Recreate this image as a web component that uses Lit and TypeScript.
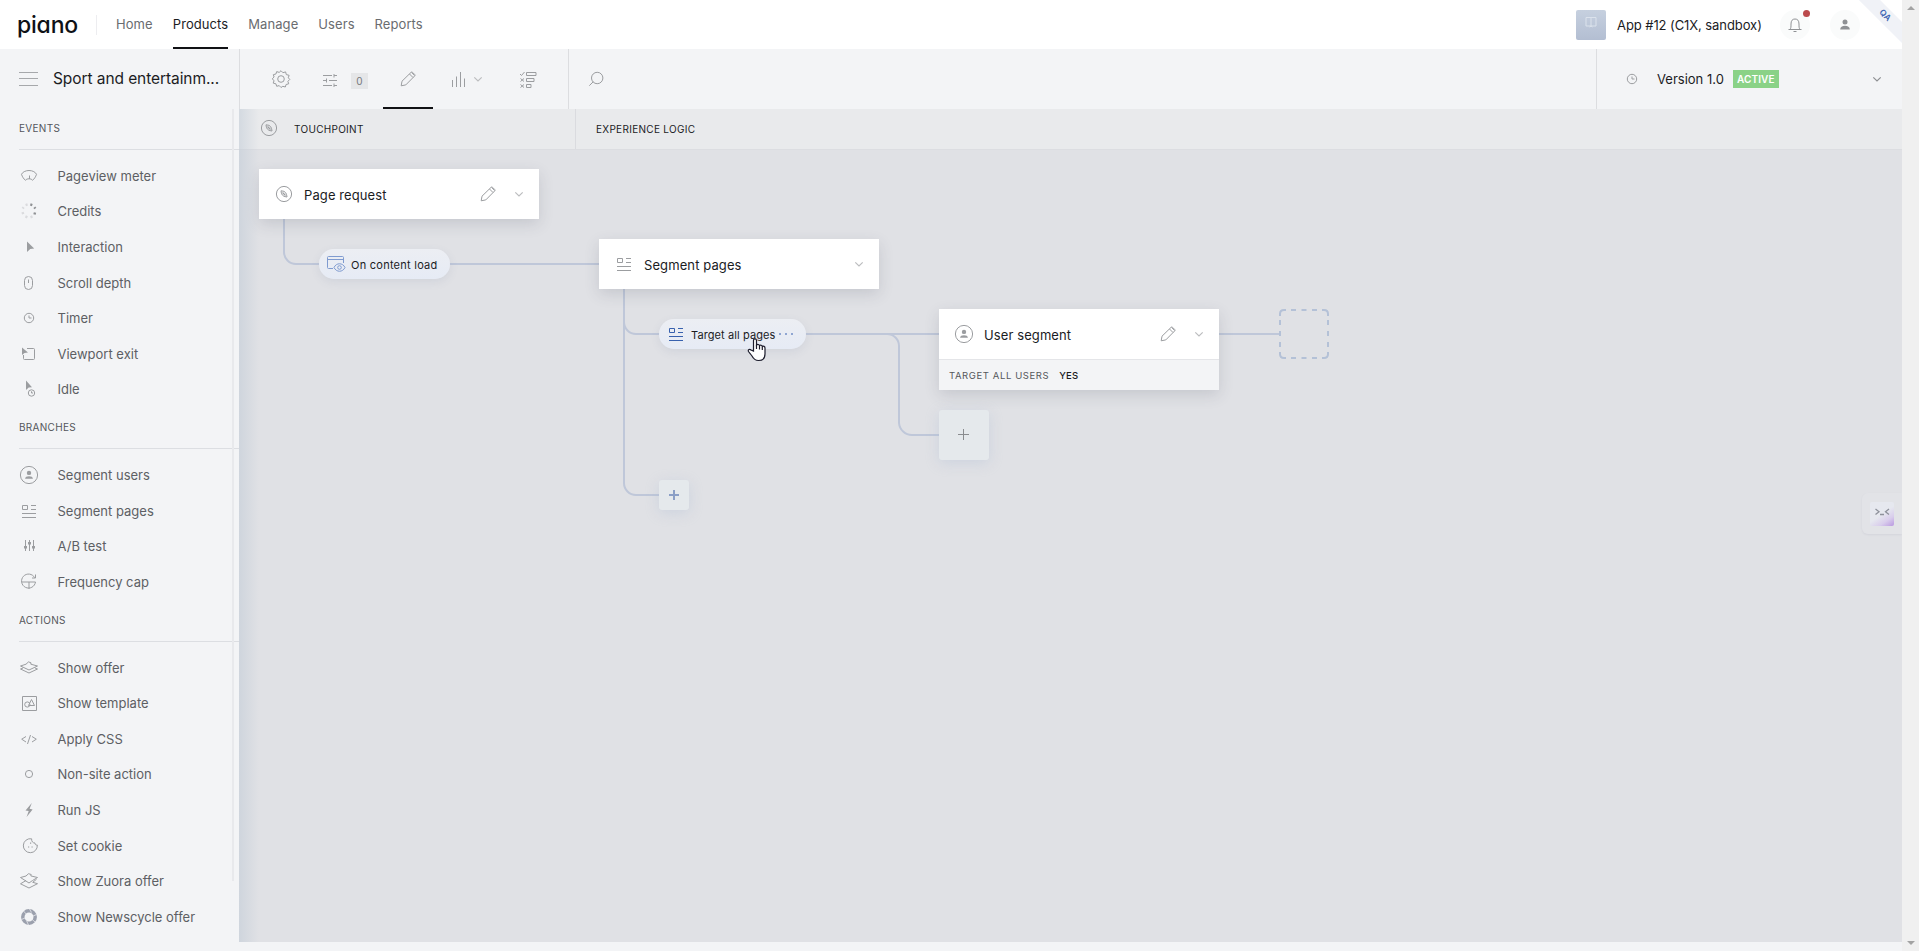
import { LitElement, html, css, svg, nothing } from 'lit';
import { customElement, property } from 'lit/decorators.js';

const icons: Record<string, unknown> = {
  meter: svg`<path d="M2.500 8.300C3.500 6.200 6.300 4.500 10 4.500s6.500 1.700 7.500 3.800c-.8 2.700-2.300 4.500-3.900 6-.8-1-2-1.500-3.600-1.500s-2.800.5-3.600 1.500C4.800 12.800 3.300 11 2.500 8.300z"/><path d="M10.500 13V9.500"/>`,
  credits: svg`<g stroke-width="2.400"><path d="M11.300 3.400l2 .7M15.300 6.200l1.100 1.400M16 11.400l-.5 2.200" stroke="#8f9194"/><path d="M8.600 3.400l-2 .7M4.700 6.200L3.600 7.600M3.500 11.200l.7 1.900M6.400 15.400l2 .9M11.500 16.300l2-.9" stroke="#dadbde"/></g>`,
  pointer: svg`<path class="fill" d="M8 4.500l7.200 7-4 .4L8 15z"/>`,
  mouse: svg`<rect x="5.500" y="3.500" width="8" height="13" rx="4"/><path d="M9.500 6.500v3.500"/>`,
  clock: svg`<circle cx="10" cy="10" r="4.700"/><path d="M10 7.500V10h2.500"/>`,
  viewport: svg`<path d="M8 4.500h6.500q1 0 1 1v9q0 1-1 1h-9q-1 0-1-1V11"/><path class="fill" d="M3 3.500l6 5-3.500.4L3 11z"/>`,
  idle: svg`<path class="fill" d="M7 1.500l6 6.800-3.300.3L7 11z"/><circle cx="12.500" cy="14" r="3.200"/><path d="M12.500 12.300V14h1.500"/>`,
  user: svg`<circle cx="10" cy="10" r="8.600"/><circle class="fill" cx="10" cy="7.900" r="2.200"/><path class="fill" d="M6.100 13.800c0-1.700 1.700-2.500 3.900-2.500s3.900.8 3.900 2.500z"/>`,
  pages: svg`<path d="M3.500 4.500h5v4h-5zM12 4.500h5M12 8.500h5M3 12.500h14M3 16.500h14"/>`,
  ab: svg`<path d="M6.500 4v11M10.500 4v11M14.500 4v11"/><path class="fill" d="M5 10h3v2.500H5zM9 6h3v2.500H9zM13 10h3v2.500h-3z"/>`,
  cap: svg`<path d="M15.700 5.700A7 7 0 1 0 16.500 10H2.500M10 10v7M16.500 2.500V6h-3.500"/>`,
  offer: svg`<path d="M1.500 8l5.500-1.800 2.500-2.300L12 4.800l-.2 1.400L18.500 8 10 12z"/><path d="M4 10l-2.500 1L10 15l8.500-4-2.500-1"/>`,
  template: svg`<path d="M3.500 3.500h14v14h-14z"/><circle cx="8.300" cy="11.500" r="2.600"/><path d="M9.500 12.500l3-6 3 6z"/>`,
  css: svg`<path d="M7 7.500l-4.300 2.700L7 13M13 7.500l4.300 2.700L13 13M11.500 6l-3 9"/>`,
  ring: svg`<circle cx="10" cy="10" r="3.600"/>`,
  bolt: svg`<path class="fill" d="M12.800 3L6.500 10.500l3.200.6L7.600 17l6-7.500-3-.7z"/>`,
  cookie: svg`<path d="M12.600 2.800A7 7 0 1 0 18.300 9c-1.600.2-2.400-.6-2.300-2-1.900.2-3.600-1.400-3.400-4.200z"/><path class="fill" d="M11 6.600h1.200v1.200H11zM9 10.400h1.200v1.200H9zM12.500 10.400h1.200v1.200h-1.200z"/>`,
  zuora: svg`<path d="M1.500 6.500L7 5l2.500-2.300 2.700.8-.4 1.400 6.700 1.600-5 3L10 12z"/><path d="M7 9.500l-5.500 3.300L10 17l8.500-4.300-4.800-1.400 3.800-3"/>`,
  newscycle: svg`<circle cx="10" cy="10" r="6.200" stroke-width="3.500" stroke="#9ba0ad"/><path stroke="#f3f4f6" stroke-width=".7" d="M10.500 2l2 3.500M17.500 7.500l-3.700 1.700M16 15l-3-2.700M9.500 18l-1.800-4M2.500 12.500l3.600-1.600M4.500 4l2.700 3"/>`,
  compass: svg`<circle cx="10" cy="10" r="7.600"/><path d="M7 6.800q3.600 0 4.800 2.100 1 1.500 1.200 4.100-3.500-.2-4.700-2-1.200-1.500-1.300-4.200z"/><path d="M8.500 8.500l3 3" stroke-width="1.300"/>`,
  gear: svg`<circle cx="10" cy="10" r="3.300"/><path d="M10 1.700l1.900 2 2.700-.8.700 2.700 2.800.7-.8 2.500 1.500 1.600-1.900 1.900.8 2.500-2.600.7-.8 2.500-2.500-.7L10 18.500l-1.800-1.900-2.500.7-.8-2.500-2.700-.7.900-2.500-1.900-1.700 1.900-1.900-.8-2.300 2.600-.7.800-2.400 2.500.8z" stroke-linejoin="round"/>`,
  sliders: svg`<path d="M3 5.500h9M14 5.500h3M14 4v3.500M3 10.500h3.500M9 10.500h8M6.500 8.500v4M3 15.500h9M14 15.500h3M14 13.500V17"/>`,
  pencil: svg`<path d="M3.200 16.800l.8-4.600L13 3.400c.5-.5 1.100-.5 1.600 0l2 2c.5.500.5 1.100 0 1.600l-8.800 8.900zM11.500 5l3.500 3.500M13.500 3.400l3.100 3.100"/>`,
  bars: svg`<path d="M3.500 11v7M7.500 7.500V18M11.500 3v15M15.500 9.500V18"/>`,
  chevron: svg`<path d="M6.300 8.300L10 12l3.700-3.700" stroke-width="1.200"/>`,
  checklist: svg`<path d="M2 5l1.500 1.500L6.500 3M8.500 3.500H18v3H8.500zM8.500 9.500H16v3H8.500zM8.500 15.500H13v3H8.500zM2.500 9.500l3.500 3M6 9.500l-3.500 3M2.500 15.500l3.500 3M6 15.500l-3.500 3"/>`,
  search: svg`<circle cx="11.200" cy="9" r="5.700"/><path d="M7.200 12.800L3.300 16.700"/>`,
  bell: svg`<path d="M3.500 14.500h13M5 14.500c1-1.500 1-2.500 1-5.500C6 5.500 7.500 4 10 4s4 1.500 4 5c0 3 0 4 1 5.500M8.500 16.500h3"/>`,
  person: svg`<circle class="fill" cx="10" cy="6.900" r="2.500"/><path class="fill" d="M5.200 14.500c0-2.500 2-3.700 4.800-3.700s4.800 1.200 4.800 3.700z"/>`,
  plus: svg`<path d="M10.500 5v11M5 10.500h11"/>`,
  boldplus: svg`<path stroke-width="2" d="M10 5v10M5 10h10"/>`,
  browser: svg`<path d="M7 14.500H2.500q-1 0-1-1v-10q0-1 1-1h14q1 0 1 1V9M1.500 5.500h16"/><path d="M8 13.500c2.300-5 8.700-5 11 0-2.300 5-8.700 5-11 0z"/><circle cx="13.500" cy="13.500" r="1.800"/>`,
  book: svg`<path d="M10 5.500v9M5 5.500h10v8.500H5zM8.500 15l1.500-1 1.500 1"/>`,
};

const menu = [
  {
    title: 'EVENTS',
    items: [
      ['meter', 'Pageview meter'],
      ['credits', 'Credits'],
      ['pointer', 'Interaction'],
      ['mouse', 'Scroll depth'],
      ['clock', 'Timer'],
      ['viewport', 'Viewport exit'],
      ['idle', 'Idle'],
    ],
  },
  {
    title: 'BRANCHES',
    items: [
      ['user', 'Segment users'],
      ['pages', 'Segment pages'],
      ['ab', 'A/B test'],
      ['cap', 'Frequency cap'],
    ],
  },
  {
    title: 'ACTIONS',
    items: [
      ['offer', 'Show offer'],
      ['template', 'Show template'],
      ['css', 'Apply CSS'],
      ['ring', 'Non-site action'],
      ['bolt', 'Run JS'],
      ['cookie', 'Set cookie'],
      ['zuora', 'Show Zuora offer'],
      ['newscycle', 'Show Newscycle offer'],
    ],
  },
];

@customElement('ui-icon')
export class UiIcon extends LitElement {
  @property() name = '';

  static styles = css`
    :host {
      display: block;
      width: 20px;
      height: 20px;
      flex: none;
      color: #9b9da0;
    }

    svg {
      display: block;
      fill: none;
      stroke: currentColor;
      stroke-width: 1;
    }

    .fill {
      fill: currentColor;
      stroke: none;
    }
  `;

  render() {
    return html`<svg width="20" height="20" viewBox="0 0 20 20">${icons[this.name]}</svg>`;
  }
}

@customElement('top-header')
export class TopHeader extends LitElement {
  static styles = css`
    :host {
      display: flex;
      height: 49px;
      flex: none;
      align-items: center;
      background: #fff;
      position: relative;
      overflow: hidden;
    }

    .logo {
      width: 77px;
      padding-left: 17px;
      box-sizing: border-box;
      font: 500 23px/48px Inter, sans-serif;
      font-feature-settings: 'cv11';
      letter-spacing: -0.2px;
      color: #0e1116;
    }

    .separator {
      width: 1px;
      height: 20px;
      margin-left: 19px;
      background: #ededf0;
    }

    nav {
      display: flex;
      gap: 20px;
      margin-left: 19px;
      flex: 1;
    }

    .link {
      font-size: 13px;
      line-height: 49px;
      height: 49px;
      box-sizing: border-box;
      letter-spacing: 0.080px;
      color: #6a6c70;
    }

    .active {
      color: #1b1c1f;
      box-shadow: inset 0 -2px #101114;
    }

    .app-logo {
      width: 30px;
      height: 30px;
      border-radius: 2px;
      background: linear-gradient(#c6d0df, #b3bed2);
      display: flex;
      justify-content: center;
      padding-top: 2px;
      box-sizing: border-box;
    }

    .app-logo ui-icon {
      color: #dbe2ec;
    }

    .app-name {
      margin-left: 11px;
      width: 145px;
      white-space: nowrap;
      font-size: 13px;
      letter-spacing: -0.080px;
    }

    .round {
      width: 30px;
      height: 30px;
      margin-left: 18px;
      border-radius: 50%;
      background: #fafbfb;
      display: flex;
      align-items: center;
      justify-content: center;
      position: relative;
    }

    .round ui-icon {
      color: #8f9194;
    }

    .user {
      margin: 0 42px 0 20px;
    }

    .dot {
      position: absolute;
      right: 0;
      top: 0;
      width: 7px;
      height: 7px;
      border-radius: 50%;
      background: #bb4a4c;
    }

    .ribbon {
      position: absolute;
      width: 80px;
      height: 15px;
      right: -23px;
      top: 8px;
      transform: rotate(45deg);
      background: #f0f2f7;
      color: #3f66b3;
      font: 600 8.500px/15px Inter, sans-serif;
      text-align: center;
    }
  `;

  render() {
    return html`
      <div class="logo">piano</div>
      <div class="separator"></div>
      <nav>
        ${['Home', 'Products', 'Manage', 'Users', 'Reports'].map(
          (label) => html`<div class="link ${label === 'Products' ? 'active' : ''}">${label}</div>`
        )}
      </nav>
      <div class="app-logo"><ui-icon name="book"></ui-icon></div>
      <div class="app-name">App #12 (C1X, sandbox)</div>
      <div class="round"><ui-icon name="bell"></ui-icon><div class="dot"></div></div>
      <div class="round user"><ui-icon name="person"></ui-icon></div>
      <div class="ribbon">QA</div>
    `;
  }
}

@customElement('side-menu')
export class SideMenu extends LitElement {
  static styles = css`
    :host {
      display: block;
      width: 239px;
      flex: none;
      position: relative;
      background: #f3f4f6;
    }

    .head {
      height: 60px;
      display: flex;
      align-items: center;
      padding-left: 19px;
      box-sizing: border-box;
    }

    .burger {
      width: 19px;
      height: 14px;
      box-sizing: border-box;
      border-top: 1px solid #a6a8ab;
      border-bottom: 1px solid #a6a8ab;
      display: flex;
      align-items: center;
      margin-bottom: 1px;
    }

    .burger::before {
      content: '';
      width: 100%;
      height: 1px;
      background: #a6a8ab;
    }

    .title {
      margin: 0 0 1px 15px;
      font-size: 15.500px;
      letter-spacing: -0.080px;
      white-space: nowrap;
    }

    .section {
      height: 40px;
      margin-left: 19px;
      border-bottom: 1px solid #dcdee2;
      font-size: 10px;
      line-height: 39px;
      letter-spacing: 0.300px;
      color: #54565b;
    }

    .list {
      padding: 8px 0 1.200px;
    }

    .item {
      height: 35.600px;
      display: flex;
      align-items: center;
      padding-left: 19px;
      font-size: 13px;
      color: #5d5f64;
    }

    .item span {
      margin-left: 18.500px;
    }

    .track {
      position: absolute;
      left: 232px;
      top: 60px;
      width: 2px;
      height: 772px;
      background: #e8e9ec;
    }
  `;

  render() {
    return html`
      <div class="head">
        <div class="burger"></div>
        <div class="title">Sport and entertainm...</div>
      </div>
      ${menu.map(
        (group) => html`
          <div class="section">${group.title}</div>
          <div class="list">
            ${group.items.map(
              ([icon, label]) => html`
                <div class="item"><ui-icon name=${icon}></ui-icon><span>${label}</span></div>
              `
            )}
          </div>
        `
      )}
      <div class="track"></div>
    `;
  }
}

@customElement('tool-bar')
export class ToolBar extends LitElement {
  static styles = css`
    :host {
      display: flex;
      height: 60px;
      flex: none;
      background: #f3f4f6;
      border-left: 1px solid #dcdde0;
    }

    .tools {
      width: 328px;
      border-right: 1px solid #dcdde0;
      display: flex;
    }

    .tool {
      display: flex;
      align-items: center;
    }

    .tool > ui-icon {
      margin-bottom: 1px;
    }

    .gear {
      padding-left: 30.500px;
      width: 49.500px;
    }

    .filters {
      width: 63px;
    }

    .badge {
      width: 17px;
      height: 16px;
      margin: 4px 0 0 11px;
      background: #e5e6e8;
      color: #77797d;
      font-size: 10px;
      line-height: 17px;
      text-align: center;
    }

    .filters ui-icon {
      margin-top: 2px;
    }

    .edit {
      width: 50px;
      justify-content: center;
      box-shadow: inset 0 -2px #101114;
    }

    .stats {
      padding-left: 16px;
      width: 69px;
    }

    .stats ui-icon + ui-icon {
      margin-left: -1px;
      color: #bcbdbf;
    }

    .search {
      flex: 1;
      padding-left: 17px;
    }

    .version {
      width: 305px;
      border-left: 1px solid #dcdde0;
    }

    .version span {
      margin: 0 9px 0 15px;
      font-size: 13px;
    }

    .version ui-icon:first-child {
      margin-left: 25px;
    }

    .tag {
      height: 18px;
      width: 46px;
      text-align: center;
      background: #8ad287;
      color: #fff;
      font-size: 10px;
      font-weight: 600;
      line-height: 19px;
      letter-spacing: 0.100px;
    }

    .open {
      margin-left: auto;
      margin-right: 15px;
      color: #8d8f92;
    }
  `;

  render() {
    return html`
      <div class="tools">
        <div class="tool gear"><ui-icon name="gear"></ui-icon></div>
        <div class="tool filters">
          <ui-icon name="sliders"></ui-icon>
          <div class="badge">0</div>
        </div>
        <div class="tool edit"><ui-icon name="pencil"></ui-icon></div>
        <div class="tool stats">
          <ui-icon name="bars"></ui-icon>
          <ui-icon name="chevron"></ui-icon>
        </div>
        <div class="tool"><ui-icon name="checklist"></ui-icon></div>
      </div>
      <div class="tool search"><ui-icon name="search"></ui-icon></div>
      <div class="tool version">
        <ui-icon name="clock"></ui-icon>
        <span>Version 1.0</span>
        <div class="tag">ACTIVE</div>
        <ui-icon class="open" name="chevron"></ui-icon>
      </div>
    `;
  }
}

@customElement('flow-card')
export class FlowCard extends LitElement {
  @property() icon = '';
  @property() label = '';
  @property({ type: Boolean }) editable = false;

  static styles = css`
    :host {
      display: block;
      width: 280px;
      background: #fff;
      box-shadow: 0 5px 14px rgba(60, 70, 90, 0.16);
    }

    .row {
      height: 50px;
      display: flex;
      align-items: center;
      padding: 0 10px 0 15px;
    }

    .label {
      flex: 1;
      margin: 1px 0 0 10px;
      font-size: 13px;
      letter-spacing: 0.100px;
    }

    .pencil {
      margin-right: 11px;
    }

    .chevron {
      color: #bcbdbf;
    }
  `;

  render() {
    return html`
      <div class="row">
        <ui-icon name=${this.icon}></ui-icon>
        <div class="label">${this.label}</div>
        ${this.editable ? html`<ui-icon class="pencil" name="pencil"></ui-icon>` : nothing}
        <ui-icon class="chevron" name="chevron"></ui-icon>
      </div>
      <slot></slot>
    `;
  }
}

@customElement('flow-canvas')
export class FlowCanvas extends LitElement {
  static styles = css`
    :host {
      display: flex;
      flex-direction: column;
      height: 833px;
      position: relative;
      background: #e0e1e5;
      overflow: hidden;
    }

    .columns {
      height: 40px;
      flex: none;
      display: flex;
      background: #e9eaec;
      box-shadow: 0 1px #dcdde1;
      font-size: 10px;
      line-height: 40px;
      letter-spacing: 0.300px;
    }

    .touchpoint {
      width: 337px;
      box-sizing: border-box;
      display: flex;
      align-items: center;
      padding-left: 20px;
      border-right: 1px solid #dadbdf;
    }

    .touchpoint ui-icon {
      margin: 0 15px 2px 0;
    }

    .logic {
      padding-left: 20px;
    }

    .shade {
      position: absolute;
      inset: 0 auto 0 0;
      width: 20px;
      background: linear-gradient(90deg, rgba(190, 201, 213, 0.500), rgba(190, 201, 213, 0));
    }

    .board {
      flex: 1;
      position: relative;
    }

    .lines {
      position: absolute;
      left: 0;
      top: 0;
      fill: none;
      stroke: #bfc7d9;
      stroke-width: 2;
    }

    .node {
      position: absolute;
    }

    .request { left: 20px; top: 20px; }
    .segment { left: 360px; top: 90px; }
    .users { left: 700px; top: 160px; }

    .pill {
      height: 30px;
      box-sizing: border-box;
      border-radius: 15px;
      background: linear-gradient(#eceef3, #e6ebf5);
      box-shadow: 0 3px 10px rgba(80, 100, 140, 0.100);
      display: flex;
      align-items: center;
      padding-left: 7px;
      font-size: 11px;
      letter-spacing: 0.100px;
      white-space: nowrap;
    }

    .pill span { margin: 1px 0 0 5px; }
    .load { left: 80px; top: 100px; width: 131px; letter-spacing: 0.250px; }
    .load ui-icon { color: #7f9bd0; margin-left: 0; }
    .target { left: 420px; top: 170px; width: 147px; }
    .target ui-icon { color: #3861ae; }

    .dots {
      display: flex;
      gap: 4px;
      margin-left: 4px;
    }

    .dots i {
      width: 2px;
      height: 2px;
      background: #8fa6d2;
    }

    .footer {
      height: 30px;
      border-top: 1px solid #e4e5e8;
      background: #f3f4f6;
      display: flex;
      gap: 10px;
      padding-left: 10px;
      font-size: 9.500px;
      line-height: 32px;
      letter-spacing: 0.600px;
      color: #55575b;
    }

    .footer b {
      font-weight: 500;
      letter-spacing: 0.200px;
      color: #1b1c1f;
    }

    .add {
      display: flex;
      align-items: center;
      justify-content: center;
      border-radius: 3px;
      background: #e5e9ec;
      box-shadow: 0 3px 14px rgba(160, 180, 210, 0.300);
    }

    .small { left: 420px; top: 331px; width: 30px; height: 30px; }
    .small ui-icon { color: #8b9fc6; }
    .large { left: 700px; top: 261px; width: 50px; height: 50px; }
    .large ui-icon { color: #8a8c8f; margin: 0 2px 2px 0; }

    .cursor {
      position: absolute;
      left: 508px;
      top: 188px;
    }

    .helper {
      position: absolute;
      right: 0;
      top: 384px;
      width: 40px;
      height: 41px;
      box-sizing: border-box;
      padding: 9px 0 0 8px;
      border-radius: 6px 0 0 6px;
      background: #e2e3e7;
      box-shadow: 0 1px 2px rgba(80, 80, 110, 0.080);
    }

    .face {
      display: block;
      width: 24px;
      height: 24px;
      border-radius: 2px;
      background: linear-gradient(145deg, #e6e8ef 50%, #d9cdec 75%, #b998e0);
      fill: none;
      stroke: #8e919b;
      stroke-width: 1.300;
    }
  `;

  render() {
    return html`
      <div class="columns">
        <div class="touchpoint"><ui-icon name="compass"></ui-icon>TOUCHPOINT</div>
        <div class="logic">EXPERIENCE LOGIC</div>
      </div>
      <div class="board">
        <svg class="lines" width="1200" height="420">
          <path d="M45 60V103A12 12 0 0 0 57 115H370" />
          <path d="M385 130V173A12 12 0 0 0 397 185H700" />
          <path d="M385 150V334A12 12 0 0 0 397 346H420" />
          <path d="M648 185A12 12 0 0 1 660 197V274A13 13 0 0 0 673 286H700" />
          <path d="M980 185H1040" />
          <path
            stroke="#b4c1d7"
            d="M1041 167V165Q1041 161 1045 161H1047M1052 161H1057M1062.500 161H1067.500M1073 161H1078M1083 161H1085Q1089 161 1089 165V167M1089 171V176M1089 182V187M1089 193V198M1089 203V205Q1089 209 1085 209H1083M1078 209H1073M1067.500 209H1062.500M1057 209H1052M1047 209H1045Q1041 209 1041 205V203M1041 198V193M1041 187V182M1041 176V171"
          />
        </svg>
        <flow-card class="node request" icon="compass" label="Page request" editable></flow-card>
        <div class="node pill load"><ui-icon name="browser"></ui-icon><span>On content load</span></div>
        <flow-card class="node segment" icon="pages" label="Segment pages"></flow-card>
        <div class="node pill target">
          <ui-icon name="pages"></ui-icon><span>Target all pages</span>
          <div class="dots"><i></i><i></i><i></i></div>
        </div>
        <flow-card class="node users" icon="user" label="User segment" editable>
          <div class="footer">TARGET ALL USERS <b>YES</b></div>
        </flow-card>
        <div class="node add large"><ui-icon name="plus"></ui-icon></div>
        <div class="node add small"><ui-icon name="boldplus"></ui-icon></div>
        <svg class="cursor" width="20" height="26" fill="#fff" stroke="#1c1c2c" stroke-width="1.200">
          <path
            d="M6.500 14V3.500c0-2.300 3-2.300 3 0V8c1-1 2.600-.6 3 .6 1-.8 2.500-.3 2.800.8 1-.5 2.700 0 2.700 1.600V17c0 4-2.500 6.500-6.500 6.500-3.500 0-5-1.500-6.500-4.500L1.500 14.500c-.8-2 1-2.800 2.500-1.500z"
          />
          <path d="M9.500 8v4M12.500 8.600V12.500M15.300 9.500V13" />
        </svg>
      </div>
      <div class="shade"></div>
      <div class="helper">
        <svg class="face"><path d="M5.500 7l3.500 2.700-3.500 2.700M19 7l-3.500 2.700 3.500 2.700M10 12.500h4" /></svg>
      </div>
    `;
  }
}

@customElement('app-root')
export class AppRoot extends LitElement {
  static styles = css`
    :host {
      display: flex;
      height: 951px;
      overflow: hidden;
      background: #f3f4f6;
      font-family: Inter, 'Liberation Sans', sans-serif;
      font-size: 13px;
      color: #1b1c1f;
    }

    .page {
      flex: 1;
      min-width: 0;
      display: flex;
      flex-direction: column;
    }

    .body {
      display: flex;
      flex: 1;
      min-height: 0;
    }

    .main {
      flex: 1;
      min-width: 0;
    }

    .scrollbar {
      width: 17px;
      flex: none;
      box-sizing: border-box;
      padding: 6px 0 6px 5px;
      background: #f0f0f0;
      display: flex;
      flex-direction: column;
      justify-content: space-between;
    }

    .up,
    .down {
      width: 0;
      border: 4px solid transparent;
    }

    .up {
      border-top: 0;
      border-bottom-color: #a3a3a3;
    }

    .down {
      border-bottom: 0;
      border-top-color: #a3a3a3;
    }
  `;

  render() {
    return html`
      <div class="page">
        <top-header></top-header>
        <div class="body">
          <side-menu></side-menu>
          <div class="main">
            <tool-bar></tool-bar>
            <flow-canvas></flow-canvas>
          </div>
        </div>
      </div>
      <div class="scrollbar">
        <div class="up"></div>
        <div class="down"></div>
      </div>
    `;
  }
}
